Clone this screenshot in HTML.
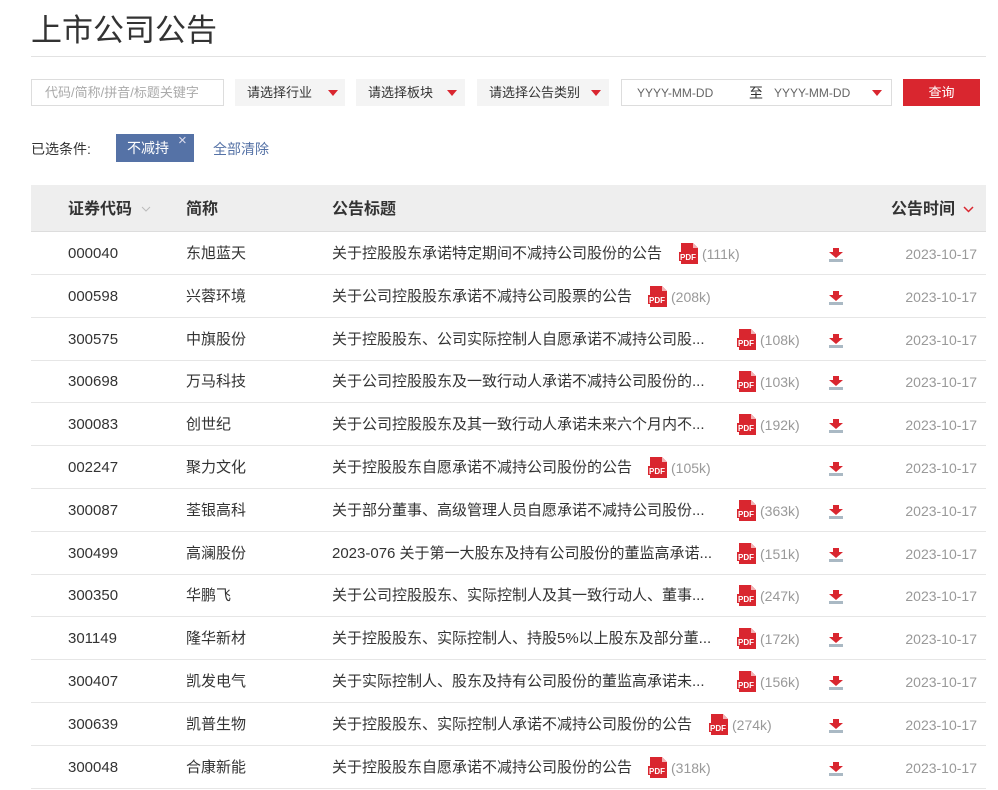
<!DOCTYPE html>
<html><head><meta charset="utf-8">
<style>
*{margin:0;padding:0;box-sizing:border-box}
body{width:998px;height:789px;background:#fff;font-family:"Liberation Sans","Noto Sans CJK SC",sans-serif;color:#333;position:relative;overflow:hidden}
.a{position:absolute;white-space:nowrap}
.sel{position:absolute;top:79px;height:27px;background:#f4f4f4;font-size:13px;line-height:27px;padding-left:12px;color:#333}
.tri{position:absolute;width:0;height:0;border-left:5px solid transparent;border-right:5px solid transparent;border-top:6px solid #d9262f;top:11px}
.row{position:absolute;left:31px;width:955px;height:43px;border-bottom:1px solid #e6e6e6;font-size:15px;line-height:44px}
.row span{position:absolute;white-space:nowrap}
.pdf{position:absolute;top:11px;width:20px;height:21px}
.row .sz{color:#999;font-size:14px}
.dl{position:absolute;left:798px;top:16px;width:14px;height:14px}
.row .dt{right:9px;color:#999;font-size:14px}
</style></head><body>
<div class="a" style="left:31px;top:9px;font-size:31px;color:#333;line-height:44px">上市公司公告</div>
<div class="a" style="left:31px;top:56px;width:955px;height:1px;background:#e2e2e2"></div>

<div class="a" style="left:31px;top:79px;width:193px;height:27px;border:1px solid #ddd;font-size:13px;line-height:25px;padding-left:13px;color:#aaa">代码/简称/拼音/标题关键字</div>
<div class="sel" style="left:235px;width:110px">请选择行业<div class="tri" style="left:93px"></div></div>
<div class="sel" style="left:356px;width:109px">请选择板块<div class="tri" style="left:91px"></div></div>
<div class="sel" style="left:477px;width:132px">请选择公告类别<div class="tri" style="left:114px"></div></div>
<div class="a" style="left:621px;top:79px;width:271px;height:27px;border:1px solid #ddd;font-size:12px;line-height:27px;color:#666">
<span class="a" style="left:15px">YYYY-MM-DD</span><span class="a" style="left:127px;font-size:14px;color:#333">至</span><span class="a" style="left:152px">YYYY-MM-DD</span><div class="tri" style="left:250px;top:10px"></div></div>
<div class="a" style="left:903px;top:79px;width:77px;height:27px;background:#d9262f;color:#fff;font-size:13px;line-height:27px;text-align:center">查询</div>

<div class="a" style="left:31px;top:134px;font-size:14px;line-height:30px;color:#333">已选条件:</div>
<div class="a" style="left:116px;top:134px;width:78px;height:28px;background:#5572a6;color:#fff;font-size:14px;line-height:28px;padding-left:11px">不减持<span style="position:absolute;left:62px;top:-7px;font-size:15px;color:#dde">×</span></div>
<div class="a" style="left:213px;top:134px;font-size:14px;line-height:30px;color:#5572a6">全部清除</div>

<div class="a" style="left:31px;top:185px;width:955px;height:47px;background:#eee;border-bottom:1px solid #ddd;font-size:16px;font-weight:bold;line-height:49px;color:#333">
<span class="a" style="left:37px">证券代码</span>
<svg class="a" style="left:110px;top:21px" width="10" height="6" viewBox="0 0 10 6"><path d="M1 1l4 4 4-4" stroke="#bbb" fill="none"/></svg>
<span class="a" style="left:155px">简称</span>
<span class="a" style="left:301px">公告标题</span>
<span class="a" style="left:860px">公告时间</span>
<svg class="a" style="left:932px;top:21px" width="11" height="7" viewBox="0 0 11 7"><path d="M1 1l4.5 4.5L10 1" stroke="#d9262f" stroke-width="1.5" fill="none"/></svg>
</div>

<svg width="0" height="0" style="position:absolute"><defs>
<symbol id="p" viewBox="0 0 20 21"><path d="M2 0h12l5 5v16H2z" fill="#d9262f"/><path d="M14 0v5h5z" fill="#f3b1b4"/><rect x="0" y="9" width="17" height="9" fill="#d9262f"/><text x="1" y="17" font-size="8" font-family="Liberation Sans" fill="#fff" font-weight="bold">PDF</text></symbol>
<symbol id="d" viewBox="0 0 14 14"><path d="M4 0h6v4h4l-7 6-7-6h4z" fill="#d9262f"/><rect x="0" y="11" width="14" height="3" fill="#aab9c4"/></symbol>
</defs></svg>

<div id="rows"></div>
<script>
var d=[["000040","东旭蓝天","关于控股股东承诺特定期间不减持公司股份的公告",679,"111k"],
["000598","兴蓉环境","关于公司控股股东承诺不减持公司股票的公告",648,"208k"],
["300575","中旗股份","关于控股股东、公司实际控制人自愿承诺不减持公司股...",737,"108k"],
["300698","万马科技","关于公司控股股东及一致行动人承诺不减持公司股份的...",737,"103k"],
["300083","创世纪","关于公司控股股东及其一致行动人承诺未来六个月内不...",737,"192k"],
["002247","聚力文化","关于控股股东自愿承诺不减持公司股份的公告",648,"105k"],
["300087","荃银高科","关于部分董事、高级管理人员自愿承诺不减持公司股份...",737,"363k"],
["300499","高澜股份","2023-076 关于第一大股东及持有公司股份的董监高承诺...",737,"151k"],
["300350","华鹏飞","关于公司控股股东、实际控制人及其一致行动人、董事...",737,"247k"],
["301149","隆华新材","关于控股股东、实际控制人、持股5%以上股东及部分董...",737,"172k"],
["300407","凯发电气","关于实际控制人、股东及持有公司股份的董监高承诺未...",737,"156k"],
["300639","凯普生物","关于控股股东、实际控制人承诺不减持公司股份的公告",709,"274k"],
["300048","合康新能","关于控股股东自愿承诺不减持公司股份的公告",648,"318k"]];
var h="";
for(var i=0;i<d.length;i++){var r=d[i];var t=232+i*42.8;
h+='<div class="row" style="top:'+t+'px"><span style="left:37px">'+r[0]+'</span><span style="left:155px">'+r[1]+'</span><span style="left:301px;max-width:400px;overflow:hidden">'+r[2]+'</span><svg class="pdf" style="left:'+(r[3]-31)+'px"><use href="#p"/></svg><span class="sz" style="left:'+(r[3]-31+23)+'px">('+r[4]+')</span><svg class="dl"><use href="#d"/></svg><span class="dt">2023-10-17</span></div>';}
document.getElementById("rows").innerHTML=h;
</script>
</body></html>
